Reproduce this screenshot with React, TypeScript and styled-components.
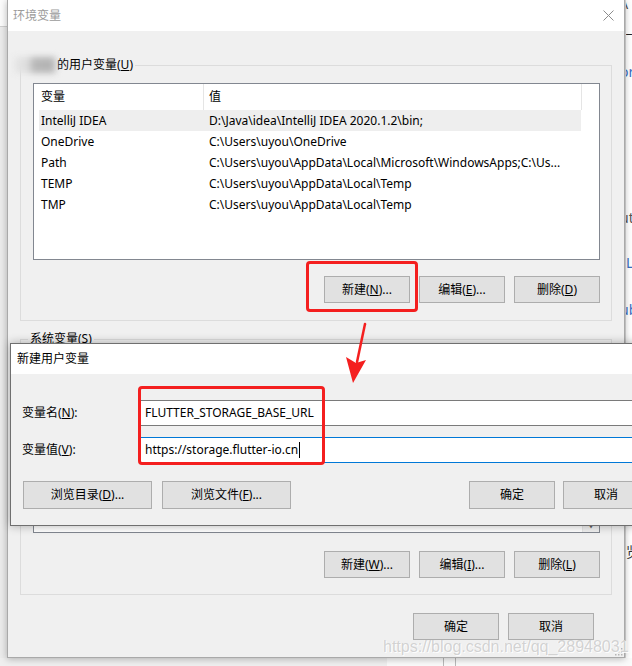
import React from "react";
import styled, { createGlobalStyle } from "styled-components";

const FONT = `"Noto Sans", "Noto Sans CJK SC", sans-serif`;

const GlobalStyle = createGlobalStyle`
  html, body { margin: 0; padding: 0; background: #ececec; }
  body { font-family: ${FONT}; font-size: 12px; color: #000; }
  * { box-sizing: border-box; }
`;

const Stage = styled.div`
  position: relative;
  width: 632px;
  height: 666px;
  overflow: hidden;
  display: grid;
  grid-template-columns: 7px 618px 7px;
  grid-template-rows: 658px 8px;
  background: #ececec;
`;

const LeftStrip = styled.div`
  background: linear-gradient(to bottom, #fbfbfb 0 26px, #cfcfcf 26px 27px, #ebebeb 27px);
`;

const RightStrip = styled.div`
  background: #ffffff;
  overflow: hidden;
  display: flex;
  flex-direction: column;
  border-left: 1px solid #d9d9d9;
`;

const Frag = styled.span<{ $mt: number; $color: string; $ml?: number }>`
  display: block;
  margin-top: ${(p) => p.$mt}px;
  margin-left: ${(p) => p.$ml ?? 0}px;
  color: ${(p) => p.$color};
  font-size: 14px;
  line-height: 16px;
  white-space: nowrap;
`;

const BottomStrip = styled.div`
  grid-column: 1 / -1;
  background: linear-gradient(
    to right,
    #efefef 0 387px,
    #fafafa 387px 443px,
    #b9b9b9 443px 444px,
    #fafafa 444px 455px,
    #b9b9b9 455px 456px,
    #fafafa 456px
  );
`;

const Window = styled.div`
  position: relative;
  display: flex;
  flex-direction: column;
  border: 1px solid #a9a9a9;
  border-top: none;
  background: #f0f0f0;
  box-shadow: 0 1px 7px rgba(0, 0, 0, 0.28);
  z-index: 1;
`;

const TitleBar = styled.div<{ $active?: boolean }>`
  height: ${(p) => (p.$active ? 30 : 31)}px;
  flex: none;
  background: #ffffff;
  display: flex;
  align-items: center;
  justify-content: space-between;
  padding: 0 10px 0 ${(p) => (p.$active ? 6 : 5)}px;
  color: ${(p) => (p.$active ? "#000000" : "#9b9b9b")};
  font-size: 12px;
  line-height: 16px;
`;

const WinBody = styled.div`
  flex: 1;
  display: flex;
  flex-direction: column;
  padding: 0 12px;
`;

const Group = styled.fieldset<{ $mt: number; $pb: number }>`
  margin: ${(p) => p.$mt}px 0 0;
  padding: 10px 11px ${(p) => p.$pb}px 12px;
  border: 1px solid #dcdcdc;
  min-width: 0;
`;

const Legend = styled.legend`
  height: 16px;
  padding: 0 2px;
  margin-left: -5px;
  line-height: 16px;
  font-size: 12px;
  white-space: nowrap;
`;

const Blurred = styled.span`
  display: inline-block;
  vertical-align: top;
  width: 42px;
  height: 16px;
  margin: 0 1px 0 -16px;
  background: linear-gradient(to right, #e6e6e6 0%, #dcdcdc 35%, #b9b9b9 45%, #b3b3b3 85%, #c4c4c4 100%);
  filter: blur(3px);
`;

const ListBox = styled.div<{ $h: number }>`
  height: ${(p) => p.$h}px;
  border: 1px solid #828790;
  background: #ffffff;
  display: flex;
  overflow: hidden;
`;

const ListContent = styled.div`
  flex: 1;
  display: flex;
  flex-direction: column;
`;

const Header = styled.div`
  display: flex;
  height: 26px;
  flex: none;
`;

const HeaderCell = styled.div<{ $w: number; $pl: number }>`
  width: ${(p) => p.$w}px;
  padding-left: ${(p) => p.$pl}px;
  border-right: 1px solid #e5e5e5;
  display: flex;
  align-items: center;
  line-height: 16px;
`;

const Row = styled.div<{ $selected?: boolean }>`
  display: flex;
  height: 21px;
  margin-left: 5px;
  width: 542px;
  align-items: center;
  background: ${(p) => (p.$selected ? "#eeeeee" : "transparent")};
  line-height: 16px;
`;

const Cell = styled.div<{ $w?: number; $pl: number }>`
  ${(p) => (p.$w ? `width: ${p.$w}px; flex: none;` : "flex: 1; min-width: 0;")}
  padding-left: ${(p) => p.$pl}px;
  white-space: nowrap;
  overflow: hidden;
`;

const ScrollBar = styled.div`
  width: 17px;
  background: #f0f0f0;
  border-left: 1px solid #e6e6e6;
  display: flex;
  flex-direction: column;
  justify-content: flex-end;
  align-items: center;
`;

const ScrollArrow = styled.span`
  font-size: 8px;
  line-height: 10px;
  color: #606060;
  margin-bottom: 2px;
`;

const ButtonRow = styled.div<{ $mt: number; $mr?: number; $gap?: number }>`
  display: flex;
  justify-content: flex-end;
  gap: ${(p) => p.$gap ?? 9}px;
  margin-top: ${(p) => p.$mt}px;
  margin-right: ${(p) => p.$mr ?? 0}px;
`;

const Button = styled.div<{ $w?: number; $h?: number; $push?: boolean }>`
  width: ${(p) => p.$w ?? 86}px;
  height: ${(p) => p.$h ?? 27}px;
  flex: none;
  border: 1px solid #adadad;
  background: #e1e1e1;
  display: flex;
  align-items: center;
  justify-content: center;
  font-size: 12px;
  line-height: 16px;
  white-space: nowrap;
  ${(p) => (p.$push ? "margin-left: auto;" : "")}
`;

const Dialog = styled.div`
  position: absolute;
  left: 10px;
  top: 343px;
  width: 652px;
  height: 183px;
  border: 1px solid #6f6f6f;
  background: #f0f0f0;
  box-shadow: 0 0 9px rgba(0, 0, 0, 0.3);
  display: flex;
  flex-direction: column;
  z-index: 2;
`;

const DialogBody = styled.div`
  display: flex;
  flex-direction: column;
  padding: 26px 12px 0 11px;
`;

const FieldRow = styled.div`
  display: flex;
  align-items: center;
  height: 26px;
  & + & {
    margin-top: 11px;
  }
`;

const FieldLabel = styled.div`
  width: 117px;
  flex: none;
  line-height: 16px;
`;

const Input = styled.div<{ $focused?: boolean }>`
  flex: 1;
  height: 26px;
  border: 1px solid ${(p) => (p.$focused ? "#0078d7" : "#7a7a7a")};
  background: #ffffff;
  display: flex;
  align-items: center;
  padding-left: 5px;
  line-height: 16px;
  white-space: nowrap;
`;

const Caret = styled.span`
  display: inline-block;
  width: 1px;
  height: 16px;
  background: #000;
  margin-left: 1px;
`;

const DialogButtons = styled.div`
  display: flex;
  gap: 10px;
  margin-top: 18px;
  padding-left: 1px;
  & > :last-child {
    margin-left: -2px;
  }
`;

const Highlight = styled.div<{ $x: number; $y: number; $w: number; $h: number }>`
  position: absolute;
  left: ${(p) => p.$x}px;
  top: ${(p) => p.$y}px;
  width: ${(p) => p.$w}px;
  height: ${(p) => p.$h}px;
  border: 3px solid #f41f1f;
  border-radius: 4px;
  z-index: 3;
  pointer-events: none;
`;

const ArrowSvg = styled.svg`
  position: absolute;
  left: 340px;
  top: 318px;
  z-index: 3;
`;

const Watermark = styled.div`
  position: absolute;
  left: 383px;
  top: 637px;
  font-family: "Liberation Sans", Arial, sans-serif;
  font-size: 16px;
  line-height: 20px;
  color: rgba(208, 208, 208, 0.95);
  text-shadow: 1px 1px 0 rgba(255, 255, 255, 0.9), -1px 0 0 rgba(255, 255, 255, 0.5);
  white-space: nowrap;
  z-index: 4;
`;

const Grip = styled.svg`
  position: absolute;
  right: 1px;
  bottom: 1px;
`;

const CloseIcon = () => (
  <svg width="11" height="11" viewBox="0 0 11 11">
    <path d="M0.5 0.5 L10.5 10.5 M10.5 0.5 L0.5 10.5" stroke="#8c8c8c" strokeWidth="1" fill="none" />
  </svg>
);

const userVars: [string, string][] = [
  ["IntelliJ IDEA", "D:\\Java\\idea\\IntelliJ IDEA 2020.1.2\\bin;"],
  ["OneDrive", "C:\\Users\\uyou\\OneDrive"],
  ["Path", "C:\\Users\\uyou\\AppData\\Local\\Microsoft\\WindowsApps;C:\\Us..."],
  ["TEMP", "C:\\Users\\uyou\\AppData\\Local\\Temp"],
  ["TMP", "C:\\Users\\uyou\\AppData\\Local\\Temp"],
];

export default function App() {
  return (
    <>
      <GlobalStyle />
      <Stage>
        <LeftStrip />
        <Window>
          <TitleBar>
            <span>环境变量</span>
            <CloseIcon />
          </TitleBar>
          <WinBody>
            <Group $mt={26} $pb={17}>
              <Legend>
                <Blurred />
                的用户变量(<u>U</u>)
              </Legend>
              <ListBox $h={177}>
                <ListContent>
                  <Header>
                    <HeaderCell $w={170} $pl={7}>变量</HeaderCell>
                    <HeaderCell $w={378} $pl={5}>值</HeaderCell>
                  </Header>
                  {userVars.map(([k, v], i) => (
                    <Row key={k} $selected={i === 0}>
                      <Cell $w={164} $pl={2}>{k}</Cell>
                      <Cell $pl={6}>{v}</Cell>
                    </Row>
                  ))}
                </ListContent>
              </ListBox>
              <ButtonRow $mt={16}>
                <Button>新建(<u>N</u>)...</Button>
                <Button>编辑(<u>E</u>)...</Button>
                <Button>删除(<u>D</u>)</Button>
              </ButtonRow>
            </Group>
            <Group $mt={10} $pb={16}>
              <Legend>系统变量(<u>S</u>)</Legend>
              <ListBox $h={176}>
                <ListContent />
                <ScrollBar>
                  <ScrollArrow>▼</ScrollArrow>
                </ScrollBar>
              </ListBox>
              <ButtonRow $mt={18}>
                <Button>新建(<u>W</u>)...</Button>
                <Button>编辑(<u>I</u>)...</Button>
                <Button>删除(<u>L</u>)</Button>
              </ButtonRow>
            </Group>
            <ButtonRow $mt={18} $mr={18}>
              <Button>确定</Button>
              <Button>取消</Button>
            </ButtonRow>
          </WinBody>
          <Grip width="8" height="8" viewBox="0 0 8 8">
            <rect x="6" y="0" width="1.5" height="1.5" fill="#b5b5b5" />
            <rect x="3" y="3" width="1.5" height="1.5" fill="#b5b5b5" />
            <rect x="6" y="3" width="1.5" height="1.5" fill="#b5b5b5" />
            <rect x="0" y="6" width="1.5" height="1.5" fill="#b5b5b5" />
            <rect x="3" y="6" width="1.5" height="1.5" fill="#b5b5b5" />
            <rect x="6" y="6" width="1.5" height="1.5" fill="#b5b5b5" />
          </Grip>
        </Window>
        <RightStrip>
          <Frag $mt={-4} $color="#444" $ml={-3}>\</Frag>
          <Frag $mt={8} $color="#222" $ml={0}>_</Frag>
          <Frag $mt={28} $color="#3a6fc2" $ml={-6}>or</Frag>
          <Frag $mt={130} $color="#555" $ml={-6}>ut</Frag>
          <Frag $mt={29} $color="#3a6fc2" $ml={0}>L</Frag>
          <Frag $mt={31} $color="#3a6fc2" $ml={-6}>ub</Frag>
          <Frag $mt={226} $color="#333" $ml={0}>览</Frag>
        </RightStrip>
        <BottomStrip />

        <Dialog>
          <TitleBar $active>
            <span>新建用户变量</span>
          </TitleBar>
          <DialogBody>
            <FieldRow>
              <FieldLabel>变量名(<u>N</u>):</FieldLabel>
              <Input>FLUTTER_STORAGE_BASE_URL</Input>
            </FieldRow>
            <FieldRow>
              <FieldLabel>变量值(<u>V</u>):</FieldLabel>
              <Input $focused>
                https://storage.flutter-io.cn
                <Caret />
              </Input>
            </FieldRow>
            <DialogButtons>
              <Button $w={129} $h={28}>浏览目录(<u>D</u>)...</Button>
              <Button $w={129} $h={28}>浏览文件(<u>F</u>)...</Button>
              <Button $w={86} $h={28} $push>确定</Button>
              <Button $w={86} $h={28}>取消</Button>
            </DialogButtons>
          </DialogBody>
        </Dialog>

        <Highlight $x={306} $y={261} $w={112} $h={51} />
        <Highlight $x={138} $y={386} $w={187} $h={79} />
        <ArrowSvg width="32" height="70" viewBox="0 0 32 70">
          <path d="M25 6 L17 44" stroke="#f41f1f" strokeWidth="2.5" strokeLinecap="round" fill="none" />
          <polygon points="13,65 6,39 16,45 26,42" fill="#f41f1f" />
        </ArrowSvg>
        <Watermark>https://blog.csdn.net/qq_28948031</Watermark>
      </Stage>
    </>
  );
}
